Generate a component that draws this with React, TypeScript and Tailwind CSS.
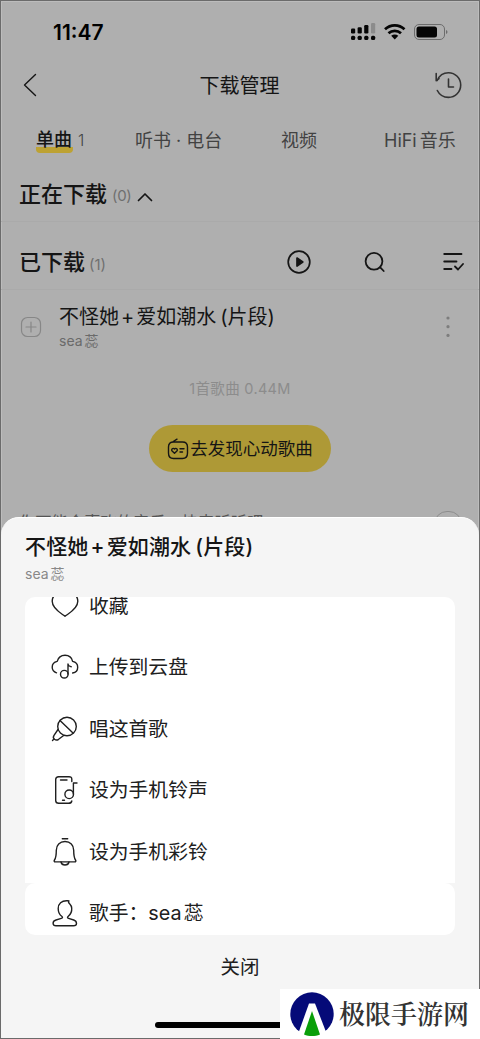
import React from "react";

type IconProps = { className?: string };

const line = {
  fill: "none",
  stroke: "currentColor",
  strokeWidth: 1.4,
  strokeLinecap: "round" as const,
  strokeLinejoin: "round" as const,
};

function HeartIcon({ className }: IconProps) {
  return (
    <svg viewBox="0 0 28 28" className={className} {...line}>
      <path d="M14 24.3C10.5 21.5 1.2 17 1.2 9.3C1.2 1.5 10 -1 14 3.5C18 -1 26.8 1.5 26.8 9.3C26.8 17 17.5 21.5 14 24.3Z" />
    </svg>
  );
}

function CloudIcon({ className }: IconProps) {
  return (
    <svg viewBox="0 0 28 28" className={className} {...line}>
      <path d="M5.5 19.8C2.8 18.8 1.2 16.7 1.2 14.2C1.2 11.2 3.2 9 6.2 8.4C7.2 4.7 10.2 2.3 14 2.3C17.8 2.3 20.8 4.7 21.6 8.4C24.7 9 26.7 11.3 26.7 14.3C26.7 17.3 24.7 19.6 21.6 20" />
      <circle cx="13.3" cy="21.2" r="3.8" />
      <path d="M17 21V11C17.3 12.8 18.4 13.4 20.2 13.7" />
    </svg>
  );
}

function MicIcon({ className }: IconProps) {
  return (
    <svg viewBox="0 0 28 28" className={className} {...line}>
      <circle cx="16" cy="11.5" r="9.3" />
      <path d="M9 5.5L22 18M7 14.5L3 20.3C2 21.8 2.3 23.3 3.5 24.2C4.8 25.3 6.3 25.2 7.6 24.3L13 20.3M3.2 23.8L1.5 25.5" />
    </svg>
  );
}

function PhoneIcon({ className }: IconProps) {
  return (
    <svg viewBox="0 0 28 28" className={className} {...line}>
      <path d="M20.8 5.5V3.3C20.8 1.5 19.8 .7 18 .7H7.7C5.7 .7 4.7 1.7 4.7 3.5V24.5C4.7 26.5 5.7 27.3 7.7 27.3H17.5C19.5 27.3 20.5 26.6 20.8 25" />
      <path d="M9.5 4H16M11.5 24.2H13.5M22.4 18V7H26" />
      <circle cx="18.2" cy="18.3" r="4.3" />
    </svg>
  );
}

function BellIcon({ className }: IconProps) {
  return (
    <svg viewBox="0 0 28 28" className={className} {...line}>
      <path d="M11.3 .8H16.7M14 3.5C8.7 3.5 5.3 7.2 5.3 12.2C5.3 17.5 5 19.8 3.5 22C2.8 23.1 3.2 23.9 4.4 23.9H23.6C24.8 23.9 25.2 23.1 24.5 22C23 19.8 22.7 17.5 22.7 12.2C22.7 7.2 19.3 3.5 14 3.5Z" />
      <path d="M10 24C10.8 28 17.2 28 18 24" />
    </svg>
  );
}

function PersonIcon({ className }: IconProps) {
  return (
    <svg viewBox="0 0 28 28" className={className} {...line}>
      <path d="M16.2 1.8C10.5 1.5 7.2 5 7.2 9.5C7.2 13 8.3 15.6 10.7 17.3C12 18.2 11.6 19 10.3 19.4L5 21C2.7 21.7 2 23 2.1 24.5C2.2 26.2 3.3 26.7 5 26.7H22.5C24.4 26.7 25.5 26 25.5 24.4C25.5 22.7 24.6 21.6 22.7 21L17.6 19.4C16.3 19 16.1 18.3 17.3 17.3C20.3 14.8 21 12.5 20.7 9C20.5 7.2 20 6.2 18.8 5C17.5 3.8 17.2 2.8 17.9 1.9C17.4 1.7 16.8 1.7 16.2 1.8" />
    </svg>
  );
}

function StatusIcons() {
  return (
    <svg viewBox="0 0 98 18" className="mr-[31px] h-[18px] w-[98px]" fill="#050505">
      <rect x="1" y="5.5" width="4.2" height="5" rx="1.2" />
      <rect x="7.6" y="4.3" width="4.2" height="6.2" rx="1.2" />
      <rect x="14.2" y="2" width="4.2" height="8.5" rx="1.2" />
      <rect x="21" y="0" width="4.2" height="10.5" rx="1.2" fill="#8c8c8c" />
      <rect x="1" y="12.8" width="4.2" height="4.2" rx="1.5" />
      <rect x="7.6" y="12.8" width="4.2" height="4.2" rx="1.5" />
      <rect x="14.2" y="12.8" width="4.2" height="4.2" rx="1.5" />
      <rect x="21" y="12.8" width="4.2" height="4.2" rx="1.5" />
      <g fill="none" stroke="#050505" strokeWidth="2.7">
        <path d="M35 6.3C40.5 1 49 1 54.5 6.3" />
        <path d="M38.5 10.3C42 7 47.5 7 51 10.3" />
      </g>
      <path d="M41.2 12.8C43.3 11 46.2 11 48.3 12.8L44.75 16.5Z" />
      <rect x="64.5" y="1.5" width="30" height="15" rx="4.5" fill="none" stroke="#6c6c6c" />
      <rect x="66.5" y="3.5" width="20.5" height="11" rx="2.5" />
      <path d="M96 7C98 7.8 98 10.2 96 11Z" fill="#6c6c6c" />
    </svg>
  );
}

function SongTitle() {
  return (
    <>
      不怪她<span className="mx-[2px] font-['Inter']">+</span>爱如潮水
      <span className="ml-[4px] font-['Inter']">(</span>片段<span className="font-['Inter']">)</span>
    </>
  );
}

const menu = [
  { label: "收藏", Icon: HeartIcon },
  { label: "上传到云盘", Icon: CloudIcon },
  { label: "唱这首歌", Icon: MicIcon },
  { label: "设为手机铃声", Icon: PhoneIcon },
  { label: "设为手机彩铃", Icon: BellIcon },
];

export default function App() {
  return (
    <main className="relative h-[1039px] w-[480px] overflow-hidden bg-[#afafaf] font-['Inter','Noto_Sans_CJK_SC',sans-serif] text-[#151515]">
      <div className="h-full overflow-hidden border border-[#6b6b6b] shadow-[inset_0_0_0_1px_#bcbcbc]">
        <div className="flex h-[62px] items-center justify-between">
          <span className="ml-[52px] pt-px text-[21px] font-semibold text-black">11:47</span>
          <StatusIcons />
        </div>

        <header className="flex h-11 items-center justify-between pr-[17px] pl-[22px]">
          <svg viewBox="0 0 14 24" className="h-6 w-[14px]" {...line}>
            <path d="M12.5 1.5L1.5 12L12.5 22.5" />
          </svg>
          <h1 className="ml-[8px] pt-[2px] text-[20px] leading-7">下载管理</h1>
          <svg viewBox="0 0 28 28" className="h-7 w-7 text-[#333]" {...line} strokeWidth={1.6}>
            <path d="M3.2 9.5C5.2 4.7 9.5 1.7 14.5 1.7C21.3 1.7 26.7 7.2 26.7 14C26.7 20.9 21.3 26.4 14.5 26.4C9.7 26.4 5.4 23.7 3.3 19.5M2.2 2.5V9.7L5 7.5M14.5 8V16H19.5" />
          </svg>
        </header>

        <nav className="flex h-16 items-center pt-[2px] text-[18px] text-[#424242]">
          <span className="relative ml-[35px] w-[99px] leading-7">
            <span className="absolute bottom-[1px] left-0 h-[6px] w-[37px] rounded-b-[4px] bg-[#bda233]" />
            <span className="relative font-medium text-[#151515]">单曲</span>
            <span className="relative ml-[6px] text-[16px] font-light">1</span>
          </span>
          <span className="w-[146px]">听书 · 电台</span>
          <span className="w-[103px]">视频</span>
          <span className="whitespace-nowrap">
            HiFi<span className="ml-[3px]">音乐</span>
          </span>
        </nav>

        <section className="flex h-[51px] items-start border-b border-[#aaaaaa] pl-[18px]">
          <h2 className="mt-[7px] text-[22px] leading-8 font-medium">正在下载</h2>
          <span className="mt-[13px] ml-[5px] text-[15px] leading-6 tracking-[-0.3px] text-[#6f6f6f]">(0)</span>
          <svg viewBox="0 0 16 10" className="mt-[21px] ml-[5px] h-[10px] w-4" {...line} strokeWidth={1.7}>
            <path d="M1.5 8.5L8 2L14.5 8.5" />
          </svg>
        </section>

        <section className="flex h-[68px] items-center border-b border-[#aaaaaa] pt-3 pr-[14px] pl-[18px]">
          <h2 className="text-[22px] leading-8 font-medium">已下载</h2>
          <span className="mt-[6px] ml-[4px] text-[15px] leading-6 text-[#6f6f6f]">(1)</span>
          <svg viewBox="0 0 24 24" className="ml-auto h-6 w-6" {...line} strokeWidth={1.7}>
            <circle cx="12" cy="12" r="10.8" />
            <path d="M10 8L15.8 12L10 16Z" fill="currentColor" />
          </svg>
          <svg viewBox="0 0 24 24" className="ml-[52px] h-6 w-6" {...line} strokeWidth={1.8}>
            <circle cx="11" cy="11.3" r="8.4" />
            <path d="M17.2 17.3L20.7 21" />
          </svg>
          <svg viewBox="0 0 24 24" className="ml-[54px] h-6 w-6" {...line} strokeWidth={1.8}>
            <path d="M3.2 4H20.5M3.2 11.5H15.5M3.2 19H10.5M14 16.5L17 19.5L22 14" />
          </svg>
        </section>

        <div className="flex h-[74px] items-center pr-[26px] pl-[19px]">
          <svg viewBox="0 0 22 22" className="h-[22px] w-[22px] text-[#878787]" {...line} strokeWidth={1.2}>
            <rect x="1.5" y="1.5" width="19" height="19" rx="6" />
            <path d="M6 11H16M11 6V16" />
          </svg>
          <div className="ml-[17px]">
            <p className="text-[20px] leading-7">
              <SongTitle />
            </p>
            <p className="text-[14px] leading-5 text-[#6a6a6a]">
              sea<span className="ml-[2px]">蕊</span>
            </p>
          </div>
          <svg viewBox="0 0 10 24" className="ml-auto h-6 w-[10px]" fill="#7d7d7d">
            <circle cx="5" cy="3" r="1.6" />
            <circle cx="5" cy="11.7" r="1.6" />
            <circle cx="5" cy="20.4" r="1.6" />
          </svg>
        </div>

        <p className="flex h-12 items-center justify-center pt-px text-[14.5px] tracking-[0.3px] text-[#8c8c8c]">1首歌曲 0.44M</p>

        <button className="mx-auto mt-[13px] flex h-[47px] w-[182px] items-center justify-center rounded-full bg-[#ae9936] text-[17.5px]">
          <svg viewBox="0 0 22 22" className="h-[22px] w-[22px] shrink-0" {...line}>
            <path d="M5.5 4L10 1.2M6.5 4H15.5C19 4 20.5 5.5 20.5 9V15C20.5 18.5 19 20.5 15.5 20.5H6.5C3 20.5 1.5 18.5 1.5 15V9C1.5 5.5 3 4 6.5 4ZM13 10.8H17M13 14H15.5M7.5 15.2L5.1 12.9C3.8 11.5 6 9.2 7.5 11C9 9.2 11.2 11.5 9.9 12.9Z" />
          </svg>
          <span className="ml-px pt-px">去发现心动歌曲</span>
        </button>

        <div className="mt-[38px] flex items-start justify-between pr-[17px] pl-[18px] text-[#555]">
          <p className="text-[16.3px] leading-6">你可能会喜欢的音乐，快来听听吧</p>
          <span className="mt-px h-[26px] w-[28px] rounded-full border border-[#8d8d8d]" />
        </div>
      </div>

      <div className="absolute inset-x-px top-[517px] bottom-px rounded-t-[18px] border-t border-white bg-[#f5f5f5] px-6">
        <h2 className="mt-[13px] text-[21px] leading-8 font-medium tracking-[0.15px]">
          <SongTitle />
        </h2>
        <p className="mt-[1px] text-[14px] leading-5 text-[#888]">
          sea<span className="ml-[2px]">蕊</span>
        </p>

        <div className="mt-[13px] h-[338px] overflow-hidden rounded-[10px]">
          <ul className="-mt-[23px] bg-white pt-px text-[#202020]">
            {menu.map(({ label, Icon }) => (
              <li key={label} className="flex h-[61.5px] items-center pl-[26px]">
                <Icon className="h-7 w-7" />
                <span className="ml-[10px] pt-[2px] text-[19.8px]">{label}</span>
              </li>
            ))}
          </ul>
          <div className="bg-[#f5f5f5]">
            <div className="flex h-[61.5px] items-center rounded-t-[10px] bg-white pl-[26px] text-[#202020]">
              <PersonIcon className="h-7 w-7" />
              <span className="ml-[10px] pt-[2px] text-[19.8px]">
                歌手：sea<span className="ml-[2px]">蕊</span>
              </span>
            </div>
          </div>
        </div>

        <button className="mx-auto mt-[16px] block text-[19.5px] leading-8 text-[#202020]">关闭</button>
        <div className="mx-auto mt-[39px] h-[6px] w-[170px] rounded-full bg-black" />
      </div>

      <div className="absolute right-0 bottom-0 flex h-[50px] w-[200px] items-center bg-white pl-[10px]">
        <svg viewBox="0 0 44 46" className="h-[46px] w-11">
          <circle cx="22" cy="23" r="21.7" fill="#050a78" />
          <path d="M19 12.5H25L38 46H7Z" fill="#fff" />
          <path d="M22 20L30 43.5C25 45.5 19 45.5 14 43.5Z" fill="#0a9f0a" />
        </svg>
        <span className="mb-[3px] ml-[5px] font-['Noto_Serif_CJK_SC','Noto_Sans_CJK_SC',serif] text-[26px] font-semibold whitespace-nowrap text-[#333]">极限手游网</span>
      </div>
    </main>
  );
}
